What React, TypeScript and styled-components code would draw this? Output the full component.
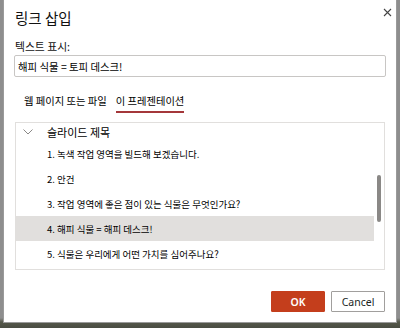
import React from "react";
import styled, { createGlobalStyle } from "styled-components";

const Global = createGlobalStyle`
  html, body { margin: 0; padding: 0; }
  body {
    width: 400px;
    height: 328px;
    overflow: hidden;
    background: linear-gradient(#8e8e8e 0, #8e8e8e 318px, #55584a 322px, #4a4d42 328px);
    font-family: "Noto Sans CJK KR", "Noto Sans", sans-serif;
    color: #000;
  }
`;

const Dialog = styled.div`
  box-sizing: border-box;
  margin: 0 0 0 3px;
  width: 394px;
  height: 323px;
  background: #fff;
  border: 1px solid #9a9a9a;
  border-top: none;
  padding: 0 10px;
  display: flex;
  flex-direction: column;
`;

const Header = styled.div`
  height: 36px;
  display: flex;
  align-items: center;
  justify-content: space-between;
`;

const Title = styled.h1`
  margin: 0 0 0 1px;
  font-size: 14.5px;
  font-weight: 400;
  line-height: 18px;
  color: #111;
`;

const CloseButton = styled.button`
  border: none;
  background: none;
  padding: 0;
  margin: -12px -7px 0 0;
  width: 12px;
  height: 12px;
  display: flex;
  align-items: center;
  justify-content: center;
`;

const Label = styled.label`
  margin: 3px 0 0 1px;
  font-size: 10.8px;
  line-height: 14px;
  color: #111;
`;

const TextInput = styled.div`
  box-sizing: border-box;
  margin-top: 2px;
  height: 22px;
  border: 1px solid #c8c6c4;
  border-radius: 2px;
  padding: 0 3px;
  display: flex;
  align-items: center;
  font-size: 10.4px;
  color: #000;
`;

const Tabs = styled.div`
  margin-top: 13px;
  padding-left: 10px;
  display: flex;
  gap: 9px;
`;

const Tab = styled.div<{ $active?: boolean }>`
  padding: 3px 0 2px;
  font-size: 10.3px;
  line-height: 16px;
  color: #000;
  border-bottom: 2px solid ${(p) => (p.$active ? "#a4373a" : "transparent")};
`;

const ListBox = styled.div`
  position: relative;
  box-sizing: border-box;
  margin: 9px 1px 0;
  height: 148px;
  border: 1px solid #e1dfdd;
  overflow: hidden;
`;

const Row = styled.div<{ $selected?: boolean; $height?: number }>`
  height: ${(p) => p.$height ?? 25}px;
  margin-right: 10px;
  display: flex;
  align-items: center;
  padding-left: 31px;
  font-size: 9.5px;
  color: #000;
  white-space: nowrap;
  background: ${(p) => (p.$selected ? "#e1dfdd" : "transparent")};
`;

const HeadingRow = styled(Row)`
  padding-left: 7px;
  font-size: 11px;
`;

const Chevron = styled.svg`
  width: 10px;
  height: 6px;
  margin-right: 14px;
`;

const ScrollThumb = styled.div`
  position: absolute;
  right: 3px;
  top: 52px;
  width: 4px;
  height: 47px;
  border-radius: 2px;
  background: #8a8886;
`;

const Footer = styled.div`
  margin-top: 21px;
  margin-right: 1px;
  display: flex;
  justify-content: flex-end;
  gap: 6px;
`;

const Button = styled.button<{ $primary?: boolean }>`
  box-sizing: border-box;
  width: 54px;
  height: 21px;
  border-radius: 1px;
  font-family: "Noto Sans", "Open Sans", sans-serif;
  font-size: 10.5px;
  font-weight: ${(p) => (p.$primary ? 600 : 400)};
  color: ${(p) => (p.$primary ? "#fff" : "#201f1e")};
  background: ${(p) => (p.$primary ? "#c43e1c" : "#fff")};
  border: 1px solid ${(p) => (p.$primary ? "#c43e1c" : "#a19f9d")};
  padding: 0;
  display: flex;
  align-items: center;
  justify-content: center;
`;

const items = [
  "1. 녹색 작업 영역을 빌드해 보겠습니다.",
  "2. 안건",
  "3. 작업 영역에 좋은 점이 있는 식물은 무엇인가요?",
  "4. 해피 식물 = 해피 데스크!",
  "5. 식물은 우리에게 어떤 가치를 심어주나요?",
];

export default function App() {
  return (
    <>
      <Global />
      <Dialog>
        <Header>
          <Title>링크 삽입</Title>
          <CloseButton aria-label="닫기">
            <svg width="9" height="9" viewBox="0 0 9 9">
              <path d="M1 1 L8 8 M8 1 L1 8" stroke="#444" strokeWidth="1.1" fill="none" />
            </svg>
          </CloseButton>
        </Header>
        <Label>텍스트 표시:</Label>
        <TextInput>해피 식물 = 토피 데스크!</TextInput>
        <Tabs>
          <Tab>웹 페이지 또는 파일</Tab>
          <Tab $active>이 프레젠테이션</Tab>
        </Tabs>
        <ListBox>
          <HeadingRow $height={18}>
            <Chevron viewBox="0 0 10 6">
              <path d="M0.5 0.5 L5 5 L9.5 0.5" stroke="#8a8886" strokeWidth="1" fill="none" />
            </Chevron>
            슬라이드 제목
          </HeadingRow>
          {items.map((t, i) => (
            <Row key={t} $selected={i === 3}>
              {t}
            </Row>
          ))}
          <ScrollThumb />
        </ListBox>
        <Footer>
          <Button $primary>OK</Button>
          <Button>Cancel</Button>
        </Footer>
      </Dialog>
    </>
  );
}
